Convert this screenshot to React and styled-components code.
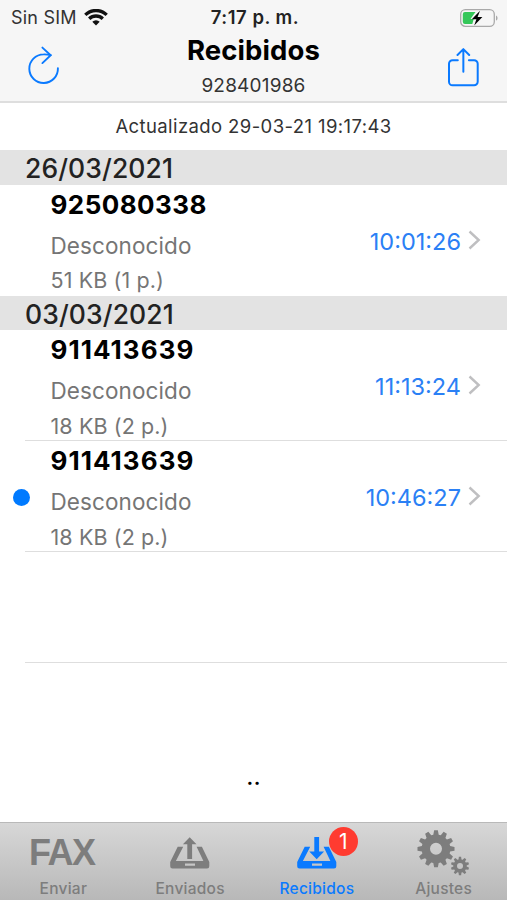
import React from 'react'
import styled, { createGlobalStyle } from 'styled-components'

const BLUE = '#0a7aff'

const groups = [
    {
        date: '26/03/2021',
        faxes: [
            { number: '925080338', name: 'Desconocido', info: '51 KB (1 p.)', time: '10:01:26', tracking: 0.45, last: true },
        ],
    },
    {
        date: '03/03/2021',
        faxes: [
            { number: '911413639', name: 'Desconocido', info: '18 KB (2 p.)', time: '11:13:24', tracking: 1.05 },
            { number: '911413639', name: 'Desconocido', info: '18 KB (2 p.)', time: '10:46:27', tracking: 1.05, unread: true },
        ],
    },
]

// toothed wheel outline, centred on cx/cy
const gearPath = (cx, cy, outer, inner, hole, teeth) => {
    const step = (Math.PI * 2) / teeth
    const pt = (r, a) =>
        `${(cx + r * Math.sin(a)).toFixed(2)} ${(cy - r * Math.cos(a)).toFixed(2)}`
    const points = []
    for (let i = 0; i < teeth; i++) {
        const a = i * step
        points.push(
            pt(inner, a - step * 0.36),
            pt(outer, a - step * 0.19),
            pt(outer, a + step * 0.19),
            pt(inner, a + step * 0.36)
        )
    }
    return `M${points.join('L')}Z M${cx - hole} ${cy}a${hole} ${hole} 0 1 0 ${hole * 2} 0a${hole} ${hole} 0 1 0 ${-hole * 2} 0Z`
}

const WifiIcon = () => (
    <svg width="24" height="17" viewBox="0 0 24 17">
        <g fill="none" stroke="#111" strokeWidth="3.3">
            <path d="M1.3 5.9a15.2 15.2 0 0 1 21.4 0" />
            <path d="M5.2 9.8a9.7 9.7 0 0 1 13.6 0" />
        </g>
        <path d="M12 16.5L8.3 12.8a5.3 5.3 0 0 1 7.4 0Z" fill="#111" />
    </svg>
)

const BatteryIcon = () => (
    <svg width="40" height="20" viewBox="0 0 40 20">
        <rect x="1.7" y="1.6" width="33.6" height="16.8" rx="4.6" fill="none" stroke="#a9a9a9" strokeWidth="1.3" />
        <path d="M37 7.4c2 .9 2 4.3 0 5.2Z" fill="#a9a9a9" />
        <path d="M6 4h10.5l-5 7h3.2l-1.4 5H6a2.2 2.2 0 0 1-2.2-2.2V6.2A2.2 2.2 0 0 1 6 4Z" fill="#34c759" />
        <path d="M21 2.8L12.8 11.2h4.6L15.2 17.6l8.2-8.7h-4.8Z" fill="#000" />
    </svg>
)

const RefreshIcon = () => (
    <svg width="34" height="44" viewBox="0 0 34 44">
        <g fill="none" stroke={BLUE} strokeWidth="1.9" strokeLinecap="round">
            <path d="M30.9 22.2A14.3 14.3 0 1 1 16.6 8.4Q20 8.3 23.5 9" />
            <path d="M15.4 1.6L23.7 9.2l-8.3 7.9" />
        </g>
    </svg>
)

const ShareIcon = () => (
    <svg width="32" height="40" viewBox="0 0 32 40">
        <g fill="none" stroke={BLUE} strokeWidth="2" strokeLinecap="round" strokeLinejoin="round">
            <path d="M10.8 12.2H5.6A3.6 3.6 0 0 0 2 15.8v17.9a3.6 3.6 0 0 0 3.6 3.6h21.5a3.6 3.6 0 0 0 3.6-3.6V15.800a3.6 3.6 0 0 0-3.6-3.6h-5.2" />
            <path d="M16.350 23.7V1.3M10.5 7L16.350 1.100l5.850 5.9" />
        </g>
    </svg>
)

const ChevronIcon = () => (
    <svg width="13" height="20" viewBox="0 0 13 20">
        <path d="M1.5 1.5L10.7 10l-9.2 8.5" fill="none" stroke="#bfbfc1" strokeWidth="2.4" />
    </svg>
)

const TrayIcon = ({ down }) => (
    <svg width="40" height="32" viewBox="0 0 40 32">
        <path
            fillRule="evenodd"
            d="M7.7 9.7h5.5L5.9 24h27.5L26.6 9.7h5.3L39.3 25v4.2a2.3 2.3 0 0 1-2.3 2.3H2.5A2.3 2.3 0 0 1 .2 29.2V25ZM15 26.4v2.4h10v-2.4Z"
        />
        <path
            d={
                down
                    ? 'M17.3 0h4.8v14.5h5L19.7 22.2l-7.4-7.7h5Z'
                    : 'M19.7.2L26.5 7.2h-4.4V22h-4.8V7.2h-4.4Z'
            }
        />
    </svg>
)

const GearsIcon = () => (
    <svg width="54" height="46" viewBox="0 0 54 46">
        <path fillRule="evenodd" d={gearPath(19, 18.8, 18.6, 14.4, 6, 12)} />
        <path fillRule="evenodd" d={gearPath(43, 36, 9.2, 6.7, 3, 10)} />
    </svg>
)

const FaxRow = ({ fax }) => (
    <Row>
        <UnreadSlot>{fax.unread && <Dot />}</UnreadSlot>
        <RowBody $line={!fax.last}>
            <Details>
                <Number $tracking={fax.tracking}>{fax.number}</Number>
                <Name>{fax.name}</Name>
                <Info>{fax.info}</Info>
            </Details>
            <Time>{fax.time}</Time>
            <ChevronIcon />
        </RowBody>
    </Row>
)

const App = () => (
    <Screen>
        <GlobalStyle />
        <Header>
            <StatusBar>
                <Carrier>
                    <span>Sin SIM</span>
                    <WifiIcon />
                </Carrier>
                <Clock>7:17 p. m.</Clock>
                <Battery>
                    <BatteryIcon />
                </Battery>
            </StatusBar>
            <NavBar>
                <NavButton>
                    <RefreshIcon />
                </NavButton>
                <Heading>
                    <Title>Recibidos</Title>
                    <Subtitle>928401986</Subtitle>
                </Heading>
                <NavButton>
                    <ShareIcon />
                </NavButton>
            </NavBar>
        </Header>
        <Updated>Actualizado 29-03-21 19:17:43</Updated>
        <List>
            {groups.map(group => (
                <section key={group.date}>
                    <DateHeader>{group.date}</DateHeader>
                    {group.faxes.map(fax => (
                        <FaxRow key={fax.time} fax={fax} />
                    ))}
                </section>
            ))}
            <Row>
                <UnreadSlot />
                <RowBody $line />
            </Row>
        </List>
        <Footnote>..</Footnote>
        <TabBar>
            <Tab>
                <TabIcon>
                    <FaxWord>FAX</FaxWord>
                </TabIcon>
                <TabLabel>Enviar</TabLabel>
            </Tab>
            <Tab>
                <TabIcon>
                    <TrayIcon />
                </TabIcon>
                <TabLabel>Enviados</TabLabel>
            </Tab>
            <Tab $active>
                <TabIcon>
                    <TrayIcon down />
                    <Badge>1</Badge>
                </TabIcon>
                <TabLabel>Recibidos</TabLabel>
            </Tab>
            <Tab>
                <TabIcon>
                    <GearsIcon />
                </TabIcon>
                <TabLabel>Ajustes</TabLabel>
            </Tab>
        </TabBar>
    </Screen>
)

const GlobalStyle = createGlobalStyle`
    body {
        margin: 0;
        background: #fff;
    }
    svg {
        display: block;
        flex: none;
    }
`

const Screen = styled.div`
    width: 507px;
    height: 900px;
    display: flex;
    flex-direction: column;
    overflow: hidden;
    background: #fff;
    color: #000;
    font-family: Inter, 'Liberation Sans', sans-serif;
    white-space: nowrap;
`

const Header = styled.header`
    height: 101px;
    flex: none;
    background: #f6f6f6;
    border-bottom: 2px solid #dedede;
`

const StatusBar = styled.div`
    height: 34px;
    display: grid;
    grid-template-columns: 1fr auto 1fr;
    align-items: center;
    padding: 0 8px 0 11px;
    box-sizing: border-box;
    font-size: 18px;
    line-height: 35px;
`

const Carrier = styled.div`
    display: flex;
    align-items: center;
    gap: 7px;
    color: #333;
    letter-spacing: 0.2px;
`

const Clock = styled.div`
    font-size: 18.5px;
    font-weight: 600;
    letter-spacing: 0.5px;
    color: #222;
`

const Battery = styled.div`
    display: flex;
    justify-content: flex-end;
`

const NavBar = styled.div`
    height: 67px;
    display: flex;
    justify-content: space-between;
    align-items: center;
    padding: 0 27px;
`

const NavButton = styled.div`
    width: 34px;
    display: flex;
    justify-content: center;
`

const Heading = styled.div`
    height: 67px;
    text-align: center;
`

const Title = styled.div`
    font-size: 27.5px;
    font-weight: 700;
    line-height: 33px;
    letter-spacing: 0.1px;
`

const Subtitle = styled.div`
    font-size: 19px;
    line-height: 37px;
    letter-spacing: 0.2px;
    color: #333;
`

const Updated = styled.div`
    height: 47px;
    flex: none;
    font-size: 18.5px;
    line-height: 47px;
    letter-spacing: 0.4px;
    text-align: center;
    color: #333;
`

const List = styled.main`
    height: 513px;
    flex: none;
`

const DateHeader = styled.div`
    height: 34.5px;
    padding-left: 25px;
    background: #e3e3e3;
    color: #222;
    font-size: 26.5px;
    font-weight: 500;
    line-height: 36px;
    letter-spacing: 0.1px;
`

const Row = styled.div`
    height: 111px;
    display: flex;
`

const UnreadSlot = styled.div`
    width: 25px;
    display: flex;
    align-items: center;
`

const Dot = styled.div`
    width: 17px;
    height: 17px;
    flex: none;
    margin-left: 13px;
    margin-top: 2px;
    border-radius: 50%;
    background: #007aff;
`

const RowBody = styled.div`
    flex: 1;
    display: flex;
    align-items: center;
    gap: 7px;
    padding: 0 26px 0 25.5px;
    box-sizing: border-box;
    border-bottom: ${({ $line }) => ($line ? '1.5px solid #dedede' : 'none')};
`

const Details = styled.div`
    flex: 1;
    align-self: flex-start;
    padding-top: 1px;
`

const Number = styled.div`
    font-size: 26px;
    font-weight: 650;
    line-height: 38px;
    letter-spacing: ${({ $tracking }) => $tracking}px;
`

const Name = styled.div`
    font-size: 22.5px;
    line-height: 43.5px;
    letter-spacing: 0.1px;
    color: #757575;
`

const Info = styled.div`
    font-size: 21.5px;
    line-height: 27px;
    letter-spacing: 0.1px;
    color: #757575;
`

const Time = styled.div`
    font-size: 23.5px;
    line-height: 34px;
    padding-top: 3px;
    color: #2b80f5;
`

const Footnote = styled.div`
    flex: 1;
    text-align: center;
    font-size: 25px;
    line-height: 30px;
    padding-top: 98px;
`

const TabBar = styled.nav`
    height: 78px;
    flex: none;
    display: flex;
    box-sizing: border-box;
    border-top: 1px solid #b9b9b9;
    background: linear-gradient(#d7d7d7, #b8b8b8);
`

const Tab = styled.div`
    flex: 1;
    display: flex;
    flex-direction: column;
    align-items: center;
    color: ${({ $active }) => ($active ? BLUE : '#7d7d7d')};
    fill: currentColor;
`

const TabIcon = styled.div`
    position: relative;
    height: 56px;
    padding-top: 4px;
    box-sizing: border-box;
    display: flex;
    align-items: center;
`

const FaxWord = styled.div`
    padding-right: 3px;
    font-family: 'Liberation Sans', sans-serif;
    font-size: 36px;
    font-weight: 700;
    letter-spacing: -1.5px;
`

const TabLabel = styled.div`
    font-size: 15.5px;
    font-weight: 500;
    line-height: 20px;
    letter-spacing: 0.25px;
`

const Badge = styled.div`
    position: absolute;
    left: 32px;
    top: 4px;
    width: 29px;
    height: 29px;
    border-radius: 50%;
    background: #ff3b30;
    color: #fff;
    font-size: 21px;
    line-height: 29px;
    text-align: center;
`

export default App
